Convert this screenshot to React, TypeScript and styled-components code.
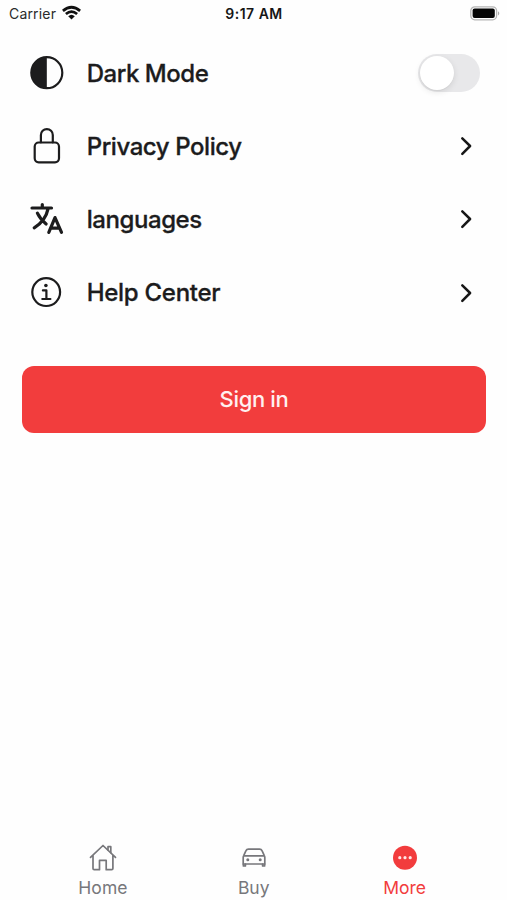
import React from "react";
import styled, { createGlobalStyle } from "styled-components";

const GlobalStyle = createGlobalStyle`
  *, *::before, *::after { box-sizing: border-box; }
  body { margin: 0; background: #fefefe; }
  button { font: inherit; border: 0; padding: 0; background: none; }
  svg { display: block; flex: none; overflow: visible; }
`;

const Screen = styled.div`
  width: 507px;
  height: 900px;
  display: flex;
  flex-direction: column;
  background: #fefefe;
  color: #1c1c1d;
  font-family: Inter, "Liberation Sans", sans-serif;
  overflow: hidden;
`;

const StatusBar = styled.header`
  height: 36px;
  padding: 4px 8px 0 9px;
  display: grid;
  grid-template-columns: 1fr auto 1fr;
  align-items: start;
  line-height: 20px;
`;

const Carrier = styled.div`
  display: flex;
  gap: 6px;
  font-size: 14px;
  letter-spacing: 0.17px;
  color: #2b2b2b;
`;

const Clock = styled.time`
  font-size: 14px;
  font-weight: 600;
  letter-spacing: 0.5px;
  color: #161616;
`;

const BatterySlot = styled.div`
  display: flex;
  justify-content: flex-end;
  padding: 1.5px 0 0;
  margin-right: -1px;
`;

const Settings = styled.main`
  flex: 1;
`;

const Row = styled.div`
  height: 73.33px;
  padding: 0 27px 0 29px;
  display: flex;
  align-items: center;
`;

const RowLabel = styled.span<{ $spacing: number }>`
  flex: 1;
  margin-left: 21.7px;
  padding-top: 1.7px;
  font-size: 24px;
  font-weight: 500;
  -webkit-text-stroke: 0.3px currentColor;
  line-height: 30px;
  letter-spacing: ${(p) => p.$spacing}px;
  white-space: nowrap;
`;

const Switch = styled.button`
  width: 62px;
  height: 38px;
  padding: 2px 1.5px;
  border-radius: 19px;
  display: flex;
  background: #e8e8ea;
`;

const Knob = styled.span`
  width: 34px;
  height: 34px;
  border-radius: 50%;
  background: #fff;
  box-shadow: 0 2px 6px rgba(0, 0, 0, 0.1), 0 1px 1px rgba(0, 0, 0, 0.04);
`;

const SignIn = styled.button`
  display: block;
  width: 464px;
  height: 67px;
  margin: 36.67px 0 0 22px;
  border-radius: 12px;
  background: #f23d3d;
`;

const SignInText = styled.span`
  color: #fff0f0;
  font-size: 22px;
  font-weight: 500;
  letter-spacing: -0.35px;
`;

const TabBar = styled.nav`
  height: 60px;
  padding: 0 27px 0 27.5px;
  display: grid;
  grid-template-columns: repeat(3, 1fr);
`;

const Tab = styled.button<{ $active?: boolean }>`
  display: flex;
  flex-direction: column;
  align-items: center;
  color: ${(p) => (p.$active ? "#f23c3d" : "#77777b")};
`;

const TabLabel = styled.span<{ $spacing: number }>`
  margin-top: 5px;
  font-size: 17.5px;
  line-height: 22px;
  letter-spacing: ${(p) => p.$spacing}px;
`;

const WifiIcon = () => (
  <svg width="19" height="16" viewBox="0 0 19 16" fill="none" stroke="#111" strokeWidth="2.7">
    <path d="M0.9 6.9Q9.5 -0.4 18.1 6.9" />
    <path d="M3.9 10.1Q9.5 5.2 15.1 10.1" />
    <path d="M6.2 12.2Q9.5 9.2 12.8 12.2L9.5 15.5Z" fill="#111" stroke="none" />
  </svg>
);

const BatteryIcon = () => (
  <svg width="30" height="15" viewBox="0 0 30 15">
    <rect x="0.8" y="0.8" width="25.8" height="13" rx="4" fill="#fff" stroke="#b5b5b5" strokeWidth="1.3" />
    <rect x="2.6" y="2.6" width="22.2" height="9.4" rx="2" fill="#050505" />
    <path d="M28 5.2q2.6 2.1 0 4.2z" fill="#aaa" />
  </svg>
);

const RowIcon = ({ children }: { children: React.ReactNode }) => (
  <svg
    width="36"
    height="40"
    viewBox="0 0 36 40"
    fill="none"
    stroke="#1c1c1d"
    strokeWidth="2.2"
    strokeLinecap="round"
    strokeLinejoin="round"
  >
    {children}
  </svg>
);

const ContrastIcon = () => (
  <RowIcon>
    <circle cx="17.8" cy="19.7" r="15.5" />
    <path d="M17.8 4.2a15.5 15.5 0 0 0 0 31z" fill="#1c1c1d" stroke="none" />
  </RowIcon>
);

const LockIcon = () => (
  <RowIcon>
    <rect x="5.7" y="16.5" width="24.3" height="19.8" rx="4" />
    <path d="M11.9 16.3V9a5.95 5.95 0 0 1 11.9 0v7.3" />
  </RowIcon>
);

const TranslateIcon = () => (
  <RowIcon>
    <g strokeWidth="3.2">
      <path d="M3 9H22.5M13.3 5.6V9M19.2 9.4C17.5 17.5 12.2 24.6 5.2 28.8M8.4 14.2C10.7 19.2 13.2 21.8 17.1 25" />
      <path d="M19.8 33.4L26 18.6L32.5 33.4M22.2 29.2H30.4" />
    </g>
  </RowIcon>
);

const InfoIcon = () => (
  <RowIcon>
    <circle cx="17.2" cy="19.1" r="13.9" />
    <circle cx="16.9" cy="12.5" r="1.8" fill="#1c1c1d" stroke="none" />
    <path d="M13.9 17.4H17.4V25.8M13.3 26H21.4" />
  </RowIcon>
);

const Chevron = () => (
  <svg width="20" height="20" viewBox="0 0 20 20" fill="none" stroke="#171717" strokeWidth="2.5" strokeLinecap="round" strokeLinejoin="round">
    <path d="M2.3 2.3L10.1 10L2.3 17.8" />
  </svg>
);

const HomeIcon = () => (
  <svg width="28" height="32" viewBox="0 0 28 32" fill="none" stroke="currentColor" strokeWidth="1.7" strokeLinecap="round" strokeLinejoin="round">
    <path d="M1.5 17.3L14 5.5L26.5 17.3M4 15.2V28.5q0 1.2 1.2 1.2H10.5V20.4H17.2V29.7H22.7q1.2 0 1.2-1.2V15.2" />
    <path d="M19 9.8V6.7H21.8V12.6" />
  </svg>
);

const CarIcon = () => (
  <svg width="28" height="32" viewBox="0 0 28 32" fill="none" stroke="currentColor" strokeWidth="1.7" strokeLinecap="round" strokeLinejoin="round">
    <path d="M3.2 17.6Q3.2 16.6 3.7 15.6L6 10.7Q6.7 9.1 8.4 9.1H19.6Q21.3 9.1 22 10.7L24.3 15.6Q24.8 16.6 24.8 17.6V24H3.2ZM4 15.8H24" />
    <path d="M3.4 24.2V26H5.4V24.2M22.6 24.2V26H24.6V24.2" />
    <circle cx="7.8" cy="19.8" r="1.5" fill="currentColor" stroke="none" />
    <circle cx="20.2" cy="19.8" r="1.5" fill="currentColor" stroke="none" />
  </svg>
);

const MoreIcon = () => (
  <svg width="28" height="32" viewBox="0 0 28 32">
    <circle cx="14" cy="17.7" r="12" fill="currentColor" />
    <g fill="#ffe6e6">
      <circle cx="8.8" cy="17.7" r="1.6" />
      <circle cx="14" cy="17.7" r="1.6" />
      <circle cx="19.2" cy="17.7" r="1.6" />
    </g>
  </svg>
);

const links = [
  { label: "Privacy Policy", icon: <LockIcon />, spacing: -0.43 },
  { label: "languages", icon: <TranslateIcon />, spacing: -0.43 },
  { label: "Help Center", icon: <InfoIcon />, spacing: -0.28 },
];

const tabs = [
  { label: "Home", icon: <HomeIcon />, spacing: 0.1 },
  { label: "Buy", icon: <CarIcon />, spacing: 0 },
  { label: "More", icon: <MoreIcon />, spacing: 0, active: true },
];

export default function App() {
  return (
    <Screen>
      <GlobalStyle />
      <StatusBar>
        <Carrier>
          <span>Carrier</span>
          <WifiIcon />
        </Carrier>
        <Clock>9:17 AM</Clock>
        <BatterySlot>
          <BatteryIcon />
        </BatterySlot>
      </StatusBar>
      <Settings>
        <Row>
          <ContrastIcon />
          <RowLabel $spacing={-0.45}>Dark Mode</RowLabel>
          <Switch role="switch" aria-checked={false} aria-label="Dark Mode">
            <Knob />
          </Switch>
        </Row>
        {links.map((item) => (
          <Row key={item.label}>
            {item.icon}
            <RowLabel $spacing={item.spacing}>{item.label}</RowLabel>
            <Chevron />
          </Row>
        ))}
        <SignIn>
          <SignInText>Sign in</SignInText>
        </SignIn>
      </Settings>
      <TabBar>
        {tabs.map((tab) => (
          <Tab key={tab.label} $active={tab.active}>
            {tab.icon}
            <TabLabel $spacing={tab.spacing}>{tab.label}</TabLabel>
          </Tab>
        ))}
      </TabBar>
    </Screen>
  );
}
